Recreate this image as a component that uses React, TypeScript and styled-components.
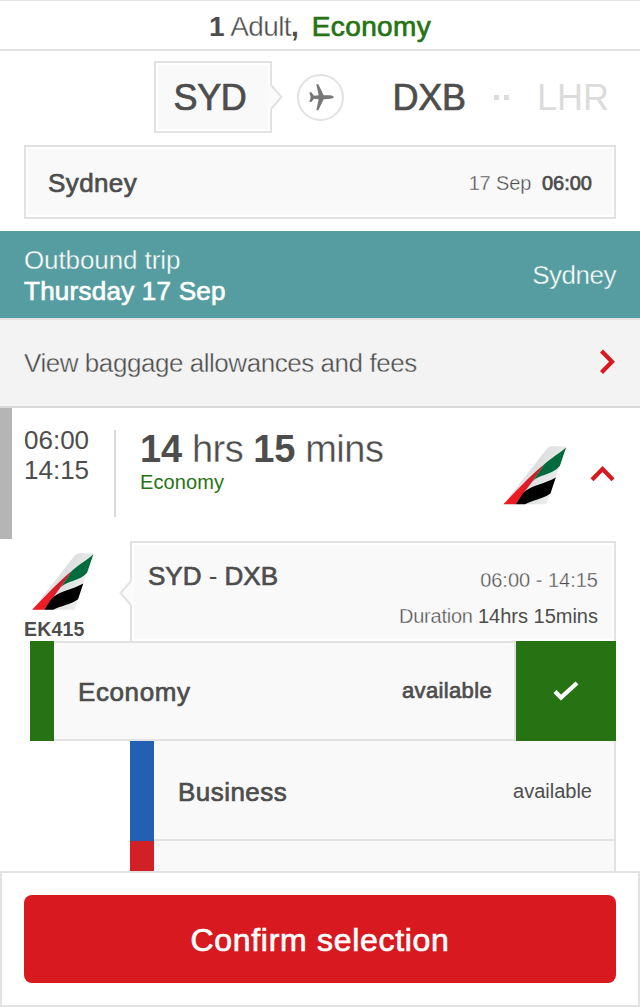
import React from "react";
import styled, { createGlobalStyle, css } from "styled-components";

const GlobalStyle = createGlobalStyle`
  * { box-sizing: border-box; }
  body { margin: 0; background: #fff; }
`;

const line = "#e2e2e2";
const panel = "#f9f9f9";
const ink = "#4d4d4d";
const green = "#277314";

type Weight = "light" | "regular" | "medium" | "bold";

const Text = styled.span<{
  $size?: number;
  $weight?: Weight;
  $color?: string;
  $surface?: string;
  $track?: number;
  $line?: number;
}>`
  display: inline-block;
  white-space: pre;
  font-size: ${(p) => p.$size ?? 26}px;
  line-height: ${(p) => (p.$line ? `${p.$line}px` : "1.2")};
  letter-spacing: ${(p) => p.$track ?? 0}px;
  color: ${(p) => p.$color ?? ink};
  font-weight: ${(p) => (p.$weight === "bold" ? 700 : 400)};
  ${(p) =>
    p.$weight === "medium" &&
    css`
      -webkit-text-stroke: 0.7px ${p.$color ?? ink};
    `}
  ${(p) =>
    p.$weight === "light" &&
    css`
      -webkit-text-stroke: 0.35px ${p.$surface ?? "#fff"};
    `}
`;

const Page = styled.div`
  display: flex;
  flex-direction: column;
  width: 640px;
  height: 1007px;
  overflow: hidden;
  background: #fff;
  font-family: "Liberation Sans", Arial, sans-serif;
`;

const Summary = styled.header`
  display: flex;
  flex: none;
  justify-content: center;
  align-items: center;
  height: 51px;
  padding-top: 4px;
  border-top: 1px solid ${line};
  border-bottom: 2px solid ${line};
`;

const CabinName = styled.div`
  margin-left: 13px;
`;

const Route = styled.div`
  display: flex;
  flex: none;
  align-items: center;
  height: 94px;
  padding: 0 0 2px 154px;
`;

const panelBox = css`
  background: ${panel};
  border: 2px solid ${line};
  box-shadow: inset 0 0 0 2px #fff;
`;

const OriginTag = styled.div`
  ${panelBox}
  position: relative;
  display: flex;
  align-items: center;
  justify-content: center;
  width: 118px;
  height: 72px;
  padding: 1px 6px 0 0;
`;

const Pointer = styled.svg<{ $side: "left" | "right"; $top: number }>`
  position: absolute;
  top: ${(p) => p.$top}px;
  ${(p) => p.$side}: -13px;
  ${(p) => p.$side === "left" && "transform: scaleX(-1);"}
`;

const PlaneBadge = styled.div`
  display: flex;
  align-items: center;
  justify-content: center;
  width: 47px;
  height: 47px;
  margin: 0 49px 0 24.5px;
  border: 2px solid ${line};
  border-radius: 50%;
`;

const Code = styled.div`
  padding-top: 2px;
`;

const Dots = styled.div`
  display: flex;
  gap: 5px;
  margin: 0 28px 0 28px;
`;

const Dot = styled.i`
  width: 5px;
  height: 5px;
  background: #dcdcdc;
`;

const Airport = styled.section`
  ${panelBox}
  display: flex;
  flex: none;
  align-items: center;
  justify-content: space-between;
  height: 74px;
  margin: 0 24px 12px;
  padding: 3px 22px 0;
`;

const Departure = styled.div`
  padding-bottom: 2px;
`;

const TripBar = styled.section`
  display: flex;
  flex: none;
  align-items: center;
  justify-content: space-between;
  height: 87px;
  padding: 3px 24px 0;
  background: #559da0;
`;

const Column = styled.div<{ $right?: boolean }>`
  display: flex;
  flex-direction: column;
  align-items: ${(p) => (p.$right ? "flex-end" : "flex-start")};
`;

const BaggageLink = styled.section`
  display: flex;
  flex: none;
  align-items: center;
  justify-content: space-between;
  height: 90px;
  padding: 0 24px;
  background: #f3f3f3;
  border-top: 2px solid ${line};
  border-bottom: 2px solid #d9d9d9;
`;

const BaggageLabel = styled.div`
  padding-top: 2px;
`;

const Flight = styled.section`
  display: flex;
  flex: none;
  align-items: flex-start;
  height: 131px;
  padding-left: 12px;
  border-left: 12px solid #b5b5b5;
`;

const Times = styled(Column)`
  width: 90px;
  margin-top: 17px;
`;

const Divider = styled.div`
  width: 2px;
  height: 87px;
  margin-top: 22px;
  background: #d9d9d9;
`;

const Length = styled(Column)`
  flex: 1;
  padding: 20px 0 0 24px;
`;

const FlightMark = styled.div`
  margin: 38px 24px 0 0;
`;

const Collapse = styled.div`
  width: 26px;
  margin: 57px 24px 0 0;
`;

const Segment = styled.section`
  display: flex;
  flex: none;
  height: 100px;
  margin: 2px 24px 0;
`;

const Carrier = styled.div`
  display: flex;
  flex-direction: column;
  width: 106px;
  padding-top: 12px;
  gap: 7px;

  svg { margin-left: 6.5px; }
`;

const Leg = styled.div`
  ${panelBox}
  position: relative;
  display: flex;
  flex: 1;
  justify-content: space-between;
  border-bottom: 0;
  padding: 17px 16px 0;
`;

const LegDetails = styled(Column)`
  padding-top: 2px;
`;

const Cabins = styled.section`
  display: flex;
  flex: 1;
  flex-direction: column;
  min-height: 0;
  overflow: hidden;
  padding-right: 24px;
`;

const Cabin = styled.div<{ $accent: string; $indent: number }>`
  display: flex;
  flex: none;
  height: 100px;
  margin-left: ${(p) => p.$indent}px;
  border-left: 24px solid ${(p) => p.$accent};
`;

const CabinBody = styled.div<{ $top?: boolean }>`
  display: flex;
  flex: 1;
  align-items: baseline;
  justify-content: space-between;
  padding: ${(p) => (p.$top ? 33 : 35)}px 22px 0 24px;
  background: ${panel};
  border-right: 2px solid ${line};
  border-bottom: 2px solid ${line};
  border-top: ${(p) => (p.$top ? `2px solid ${line}` : "0")};
`;

const Availability = styled.div`
  margin-bottom: 2px;
  align-self: flex-start;
`;

const Selected = styled.div`
  display: flex;
  align-items: center;
  justify-content: center;
  width: 100px;
  background: ${green};
`;

const Footer = styled.footer`
  flex: none;
  height: 136px;
  padding: 22px;
  border: 2px solid ${line};
`;

const Confirm = styled.button`
  display: flex;
  align-items: center;
  justify-content: center;
  width: 100%;
  height: 88px;
  padding: 3px 0 0;
  border: 0;
  border-radius: 8px;
  background: #d81920;
  font-family: inherit;
`;

const Notch = ({ side, top }: { side: "left" | "right"; top: number }) => (
  <Pointer $side={side} $top={top} width="15" height="28" viewBox="0 0 15 28">
    <path d="M0 2H3L13.5 14L3 26H0Z" fill="#fbfbfb" />
    <path d="M3 2L13.5 14L3 26" fill="none" stroke={line} strokeWidth="2" />
  </Pointer>
);

const TailFin = ({ id }: { id: string }) => (
  <svg width="63.5" height="58.5" viewBox="0 0 190 175" display="block">
    <defs>
      <linearGradient id={id} x1="0" y1="0" x2="1" y2="0.4">
        <stop offset="0.35" stopColor="#e6e7e8" />
        <stop offset="0.6" stopColor="#dddfe0" />
        <stop offset="0.9" stopColor="#eaebeb" />
      </linearGradient>
      <linearGradient id={`${id}-red`} x1="0" y1="1" x2="1" y2="0">
        <stop offset="0.35" stopColor="#ed1c24" />
        <stop offset="0.8" stopColor="#c4202b" />
      </linearGradient>
    </defs>
    <path d="M1 174L130 10Q137 1 146 1H189L130 174Z" fill={`url(#${id})`} />
    <path d="M189 4C172 20 144 36 122 56L88 106C108 84 147 88 170 60Z" fill="#006b3c" />
    <path d="M122 56C90 80 34 140 1 174H38C58 146 96 96 122 56Z" fill={`url(#${id}-red)`} />
    <path d="M158 94C125 113 84 117 61 140L38 174H66C91 162 121 157 142 142Z" fill="#000" />
  </svg>
);

export default function App() {
  return (
    <Page>
      <GlobalStyle />
      <Summary>
        <Text $size={28} $weight="bold">1</Text>
        <Text $size={28} $weight="light" $track={-0.6}> Adult</Text>
        <Text $size={28} $weight="bold">,</Text>
        <CabinName>
          <Text $size={28} $weight="medium" $color={green} $track={0.35}>Economy</Text>
        </CabinName>
      </Summary>

      <Route>
        <OriginTag>
          <Text $size={36} $weight="medium" $track={-0.4}>SYD</Text>
          <Notch side="right" top={20} />
        </OriginTag>
        <PlaneBadge>
          <svg width="28" height="28" viewBox="-42 -42 84 84">
            <path
              d="M42 1C39-4 32-5 24-5H11L-5-38H-11L-4-5L-18-4L-26-14H-32L-28 1L-32 15H-26L-18 5L-4 7L-11 40H-5L11 7L24 6C32 6 39 5 42 1Z"
              fill="#777"
            />
          </svg>
        </PlaneBadge>
        <Code>
          <Text $size={36} $weight="medium" $track={-0.2}>DXB</Text>
        </Code>
        <Dots>
          <Dot />
          <Dot />
        </Dots>
        <Code>
          <Text $size={36} $color="#dcdcdc">LHR</Text>
        </Code>
      </Route>

      <Airport>
        <Text $weight="medium" $track={0.4}>Sydney</Text>
        <Departure>
          <Text $size={20} $weight="light" $surface={panel} $track={-0.15}>17 Sep  </Text>
          <Text $size={20} $weight="medium">06:00</Text>
        </Departure>
      </Airport>

      <TripBar>
        <Column>
          <Text $weight="light" $color="#fff" $surface="#559da0" $track={-0.1} $line={31}>Outbound trip</Text>
          <Text $weight="medium" $color="#fff" $track={0.25} $line={31}>Thursday 17 Sep</Text>
        </Column>
        <Text $weight="light" $color="#fff" $surface="#559da0" $track={-0.5}>Sydney</Text>
      </TripBar>

      <BaggageLink>
        <BaggageLabel>
          <Text $weight="light" $surface="#f3f3f3" $track={-0.45}>View baggage allowances and fees</Text>
        </BaggageLabel>
        <svg width="18" height="28" viewBox="0 0 18 28">
          <path d="M3.5 2L14 12.7L3.5 23.5" fill="none" stroke="#d81920" strokeWidth="4.2" />
        </svg>
      </BaggageLink>

      <Flight>
        <Times>
          <Text $line={30}>06:00</Text>
          <Text $line={30}>14:15</Text>
        </Times>
        <Divider />
        <Length>
          <div>
            <Text $size={38} $weight="bold" $line={42} $track={-0.2}>14</Text>
            <Text $size={38} $weight="light" $line={42} $track={-0.5}> hrs </Text>
            <Text $size={38} $weight="bold" $line={42} $track={-0.2}>15</Text>
            <Text $size={38} $weight="light" $line={42} $track={-0.5}> mins</Text>
          </div>
          <Text $size={20} $color={green} $line={24} $track={0.1}>Economy</Text>
        </Length>
        <FlightMark>
          <TailFin id="fin-summary" />
        </FlightMark>
        <Collapse>
          <svg width="26" height="18" viewBox="0 0 26 18">
            <path d="M2 14.8L12.5 4L23 14.8" fill="none" stroke="#d81920" strokeWidth="4.2" />
          </svg>
        </Collapse>
      </Flight>

      <Segment>
        <Carrier>
          <TailFin id="fin-leg" />
          <Text $size={19.5} $weight="bold" $line={24} $track={0.2}>EK415</Text>
        </Carrier>
        <Leg>
          <Notch side="left" top={36} />
          <div>
            <Text $weight="medium" $line={32}>SYD</Text>
            <Text $line={32}> - </Text>
            <Text $weight="medium" $line={32}>DXB</Text>
          </div>
          <LegDetails $right>
            <Text $size={20} $weight="light" $surface={panel} $line={36}>06:00 - 14:15</Text>
            <div>
              <Text $size={20} $weight="light" $surface={panel} $line={36} $track={-0.25}>Duration </Text>
              <Text $size={20} $line={36}>14hrs 15mins</Text>
            </div>
          </LegDetails>
        </Leg>
      </Segment>

      <Cabins>
        <Cabin $accent={green} $indent={30}>
          <CabinBody $top>
            <Text $weight="medium" $track={0.6} $line={32}>Economy</Text>
            <Availability>
              <Text $size={22} $weight="medium" $track={0.35} $line={30}>available</Text>
            </Availability>
          </CabinBody>
          <Selected>
            <svg width="28" height="22" viewBox="0 0 28 22">
              <path d="M3 11.5L9 17.5L25 3" fill="none" stroke="#fff" strokeWidth="4.2" />
            </svg>
          </Selected>
        </Cabin>
        <Cabin $accent="#235fb3" $indent={130}>
          <CabinBody>
            <Text $weight="medium" $track={0.45} $line={32}>Business</Text>
            <Availability>
              <Text $size={20} $line={30}>available</Text>
            </Availability>
          </CabinBody>
        </Cabin>
        <Cabin $accent="#d22027" $indent={130}>
          <CabinBody />
        </Cabin>
      </Cabins>

      <Footer>
        <Confirm>
          <Text $size={32} $weight="medium" $color="#fff" $track={0.7}>Confirm selection</Text>
        </Confirm>
      </Footer>
    </Page>
  );
}
